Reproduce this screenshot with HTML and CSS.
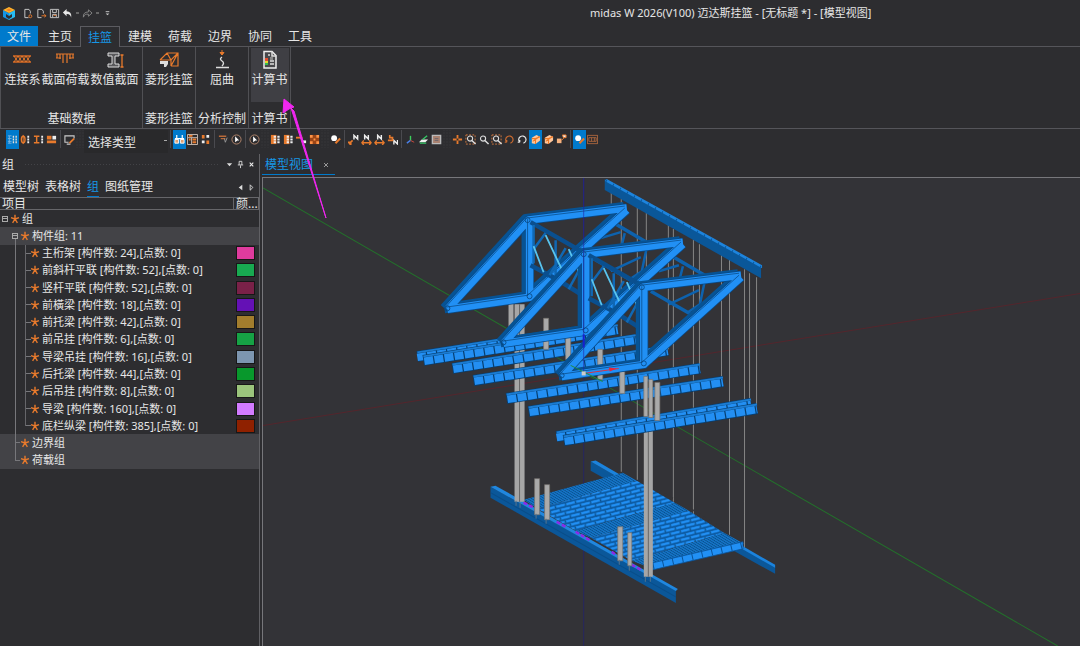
FILE: index.html
```html
<!DOCTYPE html>
<html lang="zh-CN">
<head>
<meta charset="utf-8">
<title>midas W 2026(V100) 迈达斯挂篮</title>
<link rel="stylesheet" href="styles.css">
</head>
<body>
<svg class="defs" aria-hidden="true">
  <defs>
    <symbol id="star" viewBox="0 0 10 10"><path d="M5 5V.8M5 5 1 3.6M5 5l4-1.4M5 5 2.6 8.8M5 5l2.4 3.8" stroke="#e87a2c" stroke-width="1.4" fill="none"/></symbol>
    <symbol id="page" viewBox="0 0 12 12"><path d="M8 6V3.500L6.500 1.500H2v9h4" fill="none" stroke="#d0d0d0"/></symbol>
    <symbol id="i-list" viewBox="0 0 12 12"><path d="M1 2h4M1 5h4M1 8h4M2.500 2v8M1 10h4" stroke="#7fb5e0" /><path d="M7 2v8M10 2v8" stroke="#e6dfd8" stroke-width="1.500" stroke-dasharray="2 1"/></symbol>
    <symbol id="i-loop" viewBox="0 0 12 12"><ellipse cx="3.500" cy="6" rx="2" ry="3.500" fill="none" stroke="#e87a2c" stroke-width="1.500"/><path d="M3.500 1v10" stroke="#e87a2c"/><path d="M9 2v8" stroke="#eee" stroke-width="2" stroke-dasharray="2 1"/></symbol>
    <symbol id="i-beam" viewBox="0 0 12 12"><path d="M1 2.500h6M1 9.500h6M4 2.500v7" stroke="#e87a2c" stroke-width="1.600"/><path d="M10 2v8" stroke="#eee" stroke-width="2" stroke-dasharray="2 1"/></symbol>
    <symbol id="i-blocks" viewBox="0 0 12 12"><path d="M1 2h5v4H1zM1 7h10v3H1z" fill="#e87a2c"/><path d="M7 2h4v4H7z" fill="#eee"/></symbol>
    <symbol id="i-screen" viewBox="0 0 12 12"><path d="M11 5V2H1v7h4M3 11h4" fill="none" stroke="#ccc" stroke-width="1.200"/><path d="m6 10 5-5" stroke="#e87a2c" stroke-width="2"/></symbol>
    <symbol id="i-bino" viewBox="0 0 12 12"><path d="M1 6h4v4H1zM7 6h4v4H7z" fill="#e0a070" stroke="#fff"/><path d="M3 1v4M9 1v4M1 5h10" stroke="#fff" stroke-width="1.300"/></symbol>
    <symbol id="i-tree" viewBox="0 0 12 12"><path d="M.5.500h11v11H.500zM1 4h10M5 4v7" fill="none" stroke="#d0c2b8"/><path d="M2 5h2v2H2zM6 5h4v2H6zM6 8h4v2H6zM2 1h4v2H2z" fill="#e87a2c"/></symbol>
    <symbol id="i-nodes" viewBox="0 0 12 12"><path d="M2 1h3v4H2zM7 7h3v4H7z" fill="#e87a2c"/><path d="M7 1h3v3H7zM2 7h3v3H2z" fill="#eee"/></symbol>
    <symbol id="i-filter" viewBox="0 0 12 12"><path d="M1 2.500h8M3 5h5" stroke="#b86a3a" stroke-width="1.500"/><path d="m7 5 1 4 2-5" fill="none" stroke="#999"/></symbol>
    <symbol id="i-pick" viewBox="0 0 12 12"><circle cx="6" cy="6" r="5" fill="none" stroke="#b98a6e"/><path d="m4.500 2.500 4.500 4.500H7l-2.500 2z" fill="#fff"/></symbol>
    <symbol id="i-grid" viewBox="0 0 12 12"><path d="M1 1h10v10H1z" fill="#9b4516"/><path d="M1 1h3v3H1zM8 1h3v3H8zM1 8h3v3H1zM8 8h3v3H8zM5 5h2v2H5z" fill="#ff9446"/></symbol>
    <symbol id="i-gridw" viewBox="0 0 12 12"><path d="M1 1h6v10H1z" fill="#e87a2c"/><path d="M4 3h7M4 6h7M4 9h7" stroke="#eee" stroke-width="2" stroke-dasharray="2.500 1.500"/></symbol>
    <symbol id="i-dash" viewBox="0 0 12 12"><path d="M0 4h7" stroke="#e87a2c" stroke-width="2"/><path d="M7 7h4v3H7z" fill="#eee"/></symbol>
    <symbol id="i-brush" viewBox="0 0 12 12"><circle cx="4.500" cy="4.500" r="3.200" fill="#fff"/><path d="m6 10 5-5" stroke="#e87a2c" stroke-width="2.200"/></symbol>
    <symbol id="i-n" viewBox="0 0 12 12"><path d="M6.500 6V1.500l4 4V1" fill="none" stroke="#eee" stroke-width="1.600"/><path d="m1 11 4-4M0 9h3v3" fill="none" stroke="#e87a2c" stroke-width="1.800"/></symbol>
    <symbol id="i-n2" viewBox="0 0 12 12"><path d="M4 6V1.500l4 4V1" fill="none" stroke="#eee" stroke-width="1.600"/><path d="M1 9.500h10M3 7 1 9.500 3 12M9 7l2 2.500L9 12" fill="none" stroke="#e87a2c" stroke-width="1.500"/></symbol>
    <symbol id="i-n3" viewBox="0 0 12 12"><path d="M7.500 11.500V7l4 4V6.500" fill="none" stroke="#eee" stroke-width="1.500"/><path d="M3 1v3h3v4M1 7h5" fill="none" stroke="#e87a2c" stroke-width="1.800"/></symbol>
    <symbol id="i-axes" viewBox="0 0 12 12"><path d="M6 2v5" stroke="#3bd05b" stroke-width="1.500"/><path d="m6 7-4 3" stroke="#4a80e8" stroke-width="1.500"/><path d="m6 7 4 2" stroke="#d34b3c"/></symbol>
    <symbol id="i-plane" viewBox="0 0 12 12"><path d="m1 9 3-3h7L8 9z" fill="#eee"/><path d="m5 6 5-4M2 10h7" stroke="#34c765" stroke-width="1.500"/></symbol>
    <symbol id="i-shade" viewBox="0 0 12 12"><path d="M1.500 1.500h9v9h-9z" fill="#a98271" stroke="#bbb" stroke-width="1.500"/><path d="M4 5h4M4 7h4" stroke="#69646a"/></symbol>
    <symbol id="i-move" viewBox="0 0 12 12"><path d="M6 1v4M6 7v4M1 6h4M7 6h4" stroke="#e87a2c" stroke-width="2"/></symbol>
    <symbol id="i-zoom" viewBox="0 0 12 12"><circle cx="5.500" cy="5" r="2.800" fill="none" stroke="#ddd" stroke-width="1.200"/><path d="m7.500 7 4 4" stroke="#ddd" stroke-width="1.600"/></symbol>
    <symbol id="i-frame" viewBox="0 0 12 12"><path d="M1 1h10v10H1z" fill="none" stroke="#d77b40" stroke-dasharray="2 1.500"/></symbol>
    <symbol id="i-rot" viewBox="0 0 12 12"><path d="M3 9a4 4 0 1 1 4 1M3 9V6.500M3 9H.8" fill="none" stroke="currentColor" stroke-width="1.300"/></symbol>
    <symbol id="i-cube" viewBox="0 0 12 12"><path d="m2 4 5-3 4 2v4l-5 4-4-1z" fill="#ffc79c"/><path d="M2 5h4l5-2M6 5v6M3 8l7-5" stroke="#ef7a26" stroke-width="1.200" fill="none"/></symbol>
    <symbol id="i-cubes" viewBox="0 0 12 12"><path d="M1 5h5v5H1z" fill="#f7b27e"/><path d="M7 1h4v3H8zM6 7l4-4" fill="#eee" stroke="#e87a2c"/></symbol>
    <symbol id="i-panel" viewBox="0 0 12 12"><path d="M1 1.500h10M1 10.500h10M2 4h8v4H2zM5 4v4M8 4v4M.500 1v10M11.500 1v10" fill="none" stroke="#a9653d"/></symbol>

    <pattern id="bricks" width="10" height="8" patternUnits="userSpaceOnUse" patternTransform="matrix(1 -.25 .62 .38 537 509)">
      <path d="M0 0h10v8H0z" fill="#0d5ca5"/><path d="M0 3h10v5H0z" fill="#2190f5"/><path d="M0 8h10" stroke="#074a86"/><path d="M6 3 3 8" stroke="#0b4c84"/>
    </pattern>
    <pattern id="dense" width="3" height="20" patternUnits="userSpaceOnUse" patternTransform="matrix(1 -.25 .62 .38 523 500)">
      <path d="M0 0h3v20H0z" fill="#1674c6"/><path d="M1 0v20" stroke="#07508f"/>
    </pattern>
    <path id="truss-lines" d="M446 309 527 220 625 208M528 221V297L446 309M528 297 625 210"/>
    <g id="truss" fill="none" stroke-linejoin="round">
      <use href="#truss-lines" x="-2" stroke="#075394" stroke-width="10"/>
      <use href="#truss-lines" x="1" y="1" stroke="#084a88" stroke-width="9"/>
      <use href="#truss-lines" x="1" y="1" stroke="#2190f5" stroke-width="7.500"/>
      <use href="#truss-lines" x="-1" y="-1" stroke="#07457d" stroke-width=".7"/>
      <g stroke="#07457d" stroke-width=".8"><circle cx="527" cy="221" r="2.500"/><circle cx="529" cy="297" r="2.500"/><circle cx="447" cy="309" r="2.500"/></g>
    </g>
    <g id="brace">
      <path d="m530 223 54 31M530 266l28 15 27 17" stroke="#0a4f8f" stroke-width="4.500"/>
      <path d="M555 241v40M533 226v38M565 249l-16 27M545 234l-12 16M580 268l-12 22" stroke="#1068b4" stroke-width="2.500"/>
      <path d="m533 247 10 26M545 236l16 34M568 250l10 22" stroke="#59c4ee" stroke-width="1.800"/>
    </g>
    <g id="rearbrace" fill="none" stroke="#0d62ae" stroke-width="3.500">
      <path d="m608 221 48 28M592 259l40 23"/><path d="m624 234-5 20M620 233l-20 6M640 258l-30 14M646 248l-5 24-12 8" stroke-width="2.500"/>
    </g>
    <path id="rails-back" d="M417 357 610 327M556 437 750 404"/>
    <path id="rails" d="M423 361 617 330M452 369 635 340M473 381 667 351M506 399 699 369M528 412 722 382M563 441 756 409"/>
  </defs>
</svg>

<div class="app">
  <header class="titlebar">
    <div class="quick">
      <svg class="logo" viewBox="0 0 14 15"><path d="m1 4 6 3v7l-6-3z" fill="#1496e5"/><path d="m13 4-6 3v7l6-3z" fill="#26bdf2"/><path d="m1 4 6-3 6 3-6 3z" fill="#ffb52c"/><path d="m4 4 3-1.500L10 4 7 5.500z" fill="#f58220"/><path d="m4 8 3 2 3-2v3l-3 2-3-2z" fill="#2d2d30"/></svg>
      <button aria-label="新建"><svg viewBox="0 0 12 12"><use href="#page"/><circle cx="8" cy="9" r="1.600" fill="none" stroke="#e87a2c"/></svg></button>
      <button aria-label="打开"><svg viewBox="0 0 12 12"><use href="#page"/><path d="M6 8.500h5M9 7l2 1.500L9 10" fill="none" stroke="#e87a2c"/></svg></button>
      <button aria-label="保存"><svg viewBox="0 0 12 12"><path d="M1.500 1.500h9v9h-9zM4 2v3h4V2M4 10V7h4v3" fill="none" stroke="#ccc"/><path d="M5 8h3" stroke="#e87a2c"/></svg></button>
      <button aria-label="撤销"><svg viewBox="0 0 12 12"><path d="M5 1 1 5l4 4V6.500q4-.5 5 4Q11 4 5 3.500z" fill="#e8e8e8"/></svg></button>
      <span class="dot"></span>
      <button aria-label="重做"><svg viewBox="0 0 12 12"><path d="m7 2 4 3.500L7 9V6.800Q3 6 1.500 10 1 4.500 7 4.300z" fill="none" stroke="#888"/></svg></button>
      <span class="dot"></span>
      <button aria-label="自定义"><svg viewBox="0 0 12 12"><path d="M4 4h4" stroke="#ccc"/><path d="M4 6h4L6 8z" fill="#ccc"/></svg></button>
    </div>
    <h1>midas W 2026(V100) 迈达斯挂篮 - [无标题 *] - [模型视图]</h1>
  </header>

  <nav class="menu">
    <button class="file">文件</button><button>主页</button><button class="current">挂篮</button><button>建模</button><button>荷载</button><button>边界</button><button>协同</button><button>工具</button>
  </nav>

  <section class="ribbon">
    <div class="group g-base">
      <div class="tools">
        <button><svg viewBox="0 0 20 20"><path d="M1 6h18M1 12h18" stroke="#d66a23" stroke-width="1.300"/><path d="m2 6 4 6 4-6 4 6 4-6M2 12l4-6 4 6 4-6 4 6" stroke="#e87a2c" fill="none"/></svg>连接系</button>
        <button><svg viewBox="0 0 20 20"><path d="M1 4h18M2 4v4M5 4v5M8 4v9M12 4v9M15 4v5M18 4v4M1 8h5M14 8h5" stroke="#e87a2c" stroke-width="1.200" fill="none"/></svg>截面荷载</button>
        <button><svg viewBox="0 0 20 20"><path d="M3 3h11v3h-4v8h4v3H3v-3h4V6H3z" fill="#59595c" stroke="#ddd"/><path d="M17 5v12M15.500 5h3M15.500 17h3" stroke="#e87a2c" stroke-width="1.300"/></svg>数值截面</button>
      </div>
      <h2>基础数据</h2>
    </div>
    <div class="group g-mid">
      <div class="tools"><button><svg viewBox="0 0 20 20"><path d="m1 10 7-7h11v13h-7M1 10h11l7-7M12 10v6l7-13M8 3l4 7" fill="none" stroke="#e87a2c" stroke-width="1.200"/><path d="M1 11h8v3l-2 3H5v-3H1z" fill="#ddd"/></svg>菱形挂篮</button></div>
      <h2>菱形挂篮</h2>
    </div>
    <div class="group g-mid">
      <div class="tools"><button><svg viewBox="0 0 20 20"><path d="M10 0v5M8 2.500 10 5l2-2.500z" stroke="#e87a2c" fill="#e87a2c"/><path d="M10 7q-3 2 0 4t0 5M4 17.500h13" fill="none" stroke="#ddd" stroke-width="1.400"/></svg>屈曲</button></div>
      <h2>分析控制</h2>
    </div>
    <div class="group g-last">
      <div class="tools"><button class="hover"><svg viewBox="0 0 20 20"><path d="M4 1.500h8l4 4V18H4z" fill="#48484b" stroke="#eee" stroke-width="1.500"/><path d="M12 1v5h4M8 5h2M10 11h4M10 14h4" stroke="#ddd" stroke-width="1.500" fill="none"/><path d="M5 8h3v3H5z" fill="#e64b2d"/><path d="M5 11h3v2H5z" fill="#e5d52d"/><path d="M5 13h3v2H5z" fill="#36bd4f"/><path d="M10 7h3v3h-3z" fill="#888"/></svg>计算书</button></div>
      <h2>计算书</h2>
    </div>
  </section>

  <div class="toolbar">
    <button class="on" aria-label="列表"><svg><use href="#i-list"/></svg></button><button aria-label="节点"><svg><use href="#i-loop"/></svg></button><button aria-label="截面"><svg><use href="#i-beam"/></svg></button><button aria-label="块"><svg><use href="#i-blocks"/></svg></button>
    <i class="sep"></i><button aria-label="显示"><svg><use href="#i-screen"/></svg></button><i class="grip"></i>
    <select aria-label="选择类型"><option>选择类型</option></select>
    <i class="sep"></i><button class="on" aria-label="查找"><svg><use href="#i-bino"/></svg></button><button aria-label="结构"><svg><use href="#i-tree"/></svg></button><button aria-label="全部"><svg><use href="#i-nodes"/></svg></button>
    <i class="sep"></i><button aria-label="过滤"><svg><use href="#i-filter"/></svg></button><button aria-label="拾取"><svg><use href="#i-pick"/></svg></button>
    <i class="sep"></i><button aria-label="反选"><svg><use href="#i-pick"/></svg></button><i class="grip"></i>
    <button aria-label="激活"><svg><use href="#i-gridw"/></svg></button><button aria-label="钝化"><svg><use href="#i-gridw"/></svg></button><button aria-label="切换"><svg><use href="#i-dash"/></svg></button><button aria-label="全部激活"><svg><use href="#i-grid"/></svg></button>
    <i class="grip"></i><button aria-label="格式"><svg><use href="#i-brush"/></svg></button><i class="sep"></i>
    <button aria-label="节点号"><svg><use href="#i-n"/></svg></button><button aria-label="单元号"><svg><use href="#i-n2"/></svg></button><button aria-label="荷载号"><svg><use href="#i-n2"/></svg></button><button aria-label="边界号"><svg><use href="#i-n3"/></svg></button>
    <i class="sep"></i><button aria-label="坐标轴"><svg><use href="#i-axes"/></svg></button><button aria-label="平面"><svg><use href="#i-plane"/></svg></button><button aria-label="着色"><svg><use href="#i-shade"/></svg></button><i class="grip"></i>
    <button aria-label="平移"><svg><use href="#i-move"/></svg></button><button aria-label="窗口缩放"><svg><use href="#i-frame"/><use href="#i-zoom"/></svg></button><button aria-label="缩放"><svg><use href="#i-zoom"/></svg></button><button aria-label="适合"><svg><use href="#i-frame"/><use href="#i-zoom"/></svg></button><button class="orange" aria-label="左转"><svg><use href="#i-rot"/></svg></button><button aria-label="右转"><svg><use href="#i-rot"/></svg></button><button class="on" aria-label="实体"><svg><use href="#i-cube"/></svg></button><button aria-label="消隐"><svg><use href="#i-cube"/></svg></button><button aria-label="组合"><svg><use href="#i-cubes"/></svg></button>
    <i class="sep"></i><button class="on" aria-label="刷新"><svg><use href="#i-brush"/></svg></button><button aria-label="窗格"><svg><use href="#i-panel"/></svg></button>
  </div>

  <main class="work">
    <aside class="side">
      <header class="side-head"><h2>组</h2><i class="rule"></i>
        <button aria-label="菜单"><svg viewBox="0 0 10 10"><path d="M2 3.500h6L5 7z" fill="#ddd"/></svg></button><button aria-label="固定"><svg viewBox="0 0 10 10"><path d="M3.500 1.500h3v4M2 5.500h6M3.500 1.500v4M5 6v3" stroke="#ddd" fill="none"/></svg></button><button aria-label="关闭"><svg viewBox="0 0 10 10"><path d="m3 3 4 4M7 3 3 7" stroke="#eee" stroke-width="1.200"/></svg></button>
      </header>
      <nav class="side-tabs"><button>模型树</button><button>表格树</button><button class="current">组</button><button>图纸管理</button><span class="arrows"><button aria-label="向左"><svg viewBox="0 0 10 10"><path d="M7 2v6L3 5z" fill="#ddd"/></svg></button><button aria-label="向右"><svg viewBox="0 0 10 10"><path d="M3.500 2v6l3-3z" fill="none" stroke="#ddd"/></svg></button></span></nav>
      <div class="cols"><span>项目</span><span>颜...</span></div>
      <ul class="tree">
        <li class="l0"><i class="box"></i><svg><use href="#star"/></svg><span>组</span></li>
        <li class="l1 sel"><i class="box"></i><svg><use href="#star"/></svg><span>构件组: 11</span></li>
        <li class="l2"><svg><use href="#star"/></svg><span>主桁架 [构件数: 24],[点数: 0]</span><b class="c1"></b></li>
        <li class="l2"><svg><use href="#star"/></svg><span>前斜杆平联 [构件数: 52],[点数: 0]</span><b class="c2"></b></li>
        <li class="l2"><svg><use href="#star"/></svg><span>竖杆平联 [构件数: 52],[点数: 0]</span><b class="c3"></b></li>
        <li class="l2"><svg><use href="#star"/></svg><span>前橫梁 [构件数: 18],[点数: 0]</span><b class="c4"></b></li>
        <li class="l2"><svg><use href="#star"/></svg><span>前托梁 [构件数: 42],[点数: 0]</span><b class="c5"></b></li>
        <li class="l2"><svg><use href="#star"/></svg><span>前吊挂 [构件数: 6],[点数: 0]</span><b class="c6"></b></li>
        <li class="l2"><svg><use href="#star"/></svg><span>导梁吊挂 [构件数: 16],[点数: 0]</span><b class="c7"></b></li>
        <li class="l2"><svg><use href="#star"/></svg><span>后托梁 [构件数: 44],[点数: 0]</span><b class="c8"></b></li>
        <li class="l2"><svg><use href="#star"/></svg><span>后吊挂 [构件数: 8],[点数: 0]</span><b class="c9"></b></li>
        <li class="l2"><svg><use href="#star"/></svg><span>导梁 [构件数: 160],[点数: 0]</span><b class="c10"></b></li>
        <li class="l2 end"><svg><use href="#star"/></svg><span>底栏纵梁 [构件数: 385],[点数: 0]</span><b class="c11"></b></li>
        <li class="l1 sel"><svg><use href="#star"/></svg><span>边界组</span></li>
        <li class="l1 sel end"><svg><use href="#star"/></svg><span>荷载组</span></li>
      </ul>
    </aside>

    <section class="view">
      <div class="view-tab"><span>模型视图</span><button aria-label="关闭视图"><svg viewBox="0 0 10 10"><path d="m3 3 4 4M7 3 3 7" stroke="#999"/></svg></button></div>
      <div class="canvas">
        <svg viewBox="263 179 817 467" preserveAspectRatio="xMinYMin slice" role="img" aria-label="挂篮三维模型">
          <path d="M263 426 1080 294" stroke="#5c2229" stroke-width=".8"/>
          <path d="M583 179v467" stroke="#262660"/>
          <path d="M263 189 1056 646" stroke="#23702b"/>
          <!-- hangers -->
          <path d="M610.500 190V230M620.500 200V472M636.500 205V480M645.500 210V300M667.500 225V350M672.500 230V502M692.500 240V515M698.500 245V368M720.500 255V380M728.500 260V535M743.500 270V548M748.500 274V404M755.500 278V405" stroke="#858585"/>
          <!-- rear edge beam -->
          <path d="m590 462 184 105v7L590 471z" fill="#0b5799"/><path d="m590 462 5-1 179 104v3z" fill="#1b83dd"/>
          <!-- deck -->
          <path d="m523 500 99-27 14 8-99 28z" fill="url(#dense)"/>
          <path d="m537 509 99-28 38 22-99 28z" fill="url(#bricks)"/>
          <path d="m575 531 99-28 14 8-98 27z" fill="url(#dense)"/>
          <path d="m590 538 98-27 35 22-92 28z" fill="url(#bricks)"/>
          <path d="m631 561 92-28 20 11-91 25z" fill="url(#dense)"/>
          <path d="m652 563 90-21v7l-90 21z" fill="#2190f5" stroke="#0a549a" stroke-width=".8"/>
          <path d="m652 566 90-21" stroke="#0a549a" stroke-width="7" stroke-dasharray="1 9"/>
          <path d="m639 480 37 22m14 8 35 22" stroke="#333337" stroke-width="3" stroke-dasharray="3 4"/>
          <!-- front edge beam -->
          <path d="m490 487 185 103v13L490 498z" fill="#0b5799"/><path d="m490 487 5-1 182 103-2 2z" fill="#2087df"/><path d="m490 493 185 104" stroke="#0a4d88"/>
          <path d="m523 503 12 6M556 522l9 5M575 532l15 9M611 552l4 3M631 565l9 5" stroke="#8b2be8" stroke-width="2.500" stroke-dasharray="4 2"/>
          <!-- rear bracing and hanging posts -->
          <path d="M514 305h10v197h-10zM508 303h5v40h-5z" fill="#a6a6a6"/><path d="M519 305v197" stroke="#666"/>
          <path d="M643 430h9v147h-9z" fill="#a6a6a6"/><path d="M647.500 430v147" stroke="#666"/>
          <g fill="none">
            <use href="#rails-back" stroke="#063f72" stroke-width="11"/>
            <use href="#rails-back" y="-4" stroke="#1b7cd2" stroke-width="2"/>
            <use href="#rails-back" y="1" stroke="#238ff3" stroke-width="7.500" stroke-dasharray="9 1.200"/>
            <use href="#rails" stroke="#063f72" stroke-width="11"/>
            <use href="#rails" y="-4" stroke="#1b7cd2" stroke-width="2"/>
            <use href="#rails" y="1" stroke="#238ff3" stroke-width="7.500" stroke-dasharray="0 1 9 .2"/>
          </g>
          <path d="M543 319h5v31h-5zM565 338h5v22h-5zM597 350h5v30h-5zM619 372h5v22h-5zM643 377h4v40h-4zM648 380h4v38h-4zM654 383h5v38h-5zM534 479h5v36h-5zM544 485h5v35h-5zM617 527h5v34h-5zM627 533h4v33h-4z" fill="#aaa" stroke="#77736e" stroke-width=".7"/>
          <path d="M515.500 501v5M519.500 503v5M535.500 514v5M545.500 519v5M618.500 560v5M628.500 566v5M644.500 577v5M649.500 577v5" stroke="#58748b"/>
          <!-- main trusses -->
          <use href="#rearbrace"/><use href="#rearbrace" x="58" y="33"/>
          <use href="#truss"/><use href="#brace"/>
          <use href="#truss" x="56" y="34"/><use href="#brace" x="58" y="33"/>
          <use href="#truss" x="114" y="67"/>
          <!-- top cross beam -->
          <path d="m604 180 156 87v12L604 191z" fill="#0a5799"/><path d="m604 182 2-2 155 86v3z" fill="#1d84dd"/><path d="m605 182 156 87" stroke="#0a589e" stroke-width="3" stroke-dasharray="1 7"/>
          <path d="M583 179v196" stroke="#2222a5" stroke-width="1" opacity=".6"/><path d="M583 335v13" stroke="#1720d0" stroke-width="2"/>
          <path d="M583 374 618 369" stroke="#d33549"/><path d="m608 368 8 1-7 3z" fill="#e3283c"/>
          <path d="M570 366 602 382" stroke="#218b45"/><path d="M581 372h4v4h-4z" fill="#ccc"/>
        </svg>
      </div>
    </section>
  </main>
  <svg class="pointer" viewBox="0 0 46 124" aria-hidden="true"><path d="M44 121 9 11l-2 1-6 4L2 2l10 8-3 1 3 3z" fill="#f026f0" stroke="#f026f0" stroke-linejoin="round"/></svg>
</div>
</body>
</html>
```
FILE: styles.css
```css
* { box-sizing: border-box; }
body { margin: 0; background: #2d2d30; color: #e6e6e6; font: 12px/16px "Noto Sans", "Noto Sans CJK SC", sans-serif; }
h1, h2 { margin: 0; font-size: 12px; font-weight: 400; }
button { padding: 0; border: 0; background: none; color: inherit; font: inherit; white-space: nowrap; }
svg { display: block; }
.defs { position: absolute; width: 0; height: 0; }
.app { position: relative; display: flex; flex-direction: column; height: 100vh; overflow: hidden; }

.titlebar { display: flex; flex: none; height: 26px; align-items: center; }
.quick { display: flex; flex: 0 0 590px; align-items: center; padding-left: 2px; }
.quick .logo { width: 14px; height: 15px; margin-right: 6px; }
.quick button { width: 13px; }
.quick button svg { width: 11px; height: 11px; margin: auto; }
.dot { width: 3px; height: 2px; margin: 0 2px; background: #666; }
.titlebar h1 { font-size: 11px; white-space: nowrap; }

.menu { display: flex; flex: none; height: 21px; border-bottom: 1px solid #55555a; }
.menu button { width: 40px; height: 20px; padding-top: 2px; }
.menu .file { width: 38px; background: #007acc; }
.menu .file + button { margin-left: 2px; }
.menu .current { height: 21px; padding-top: 1px; border: 1px solid #5b5b60; border-bottom: 0; background: #2d2d30; color: #1697e6; }

.ribbon { display: flex; flex: none; height: 82px; border-bottom: 1px solid #55555a; }
.group { display: flex; flex-direction: column; justify-content: space-between; align-items: center; border-right: 1px solid #505054; padding-bottom: 1px; }
.tools { display: flex; justify-content: center; gap: 1px; padding-top: 1px; }
.tools button { display: flex; flex-direction: column; align-items: center; height: 54px; gap: 2px; padding-top: 2px; }
.tools svg { width: 20px; height: 20px; }
.g-base { width: 143px; border-left: 1px solid #505054; }
.g-mid { width: 53px; }
.g-last { width: 42px; }
.group h2 { white-space: nowrap; }
.tools .hover { width: 38px; background: #3f3f44; }

.toolbar { display: flex; flex: none; height: 25px; align-items: flex-start; padding: 1px 0 0 6px; }
.toolbar button { display: grid; place-items: center; width: 13px; height: 19px; }
.toolbar button svg { width: 11px; height: 11px; }
.toolbar .on { background: #007acc; }
.toolbar .orange { color: #c86a30; }
.sep, .grip { flex: none; width: 5px; height: 18px; background: linear-gradient(#4a4a4f, #4a4a4f) center / 1px 100% no-repeat; }
.grip { width: 8px; background: radial-gradient(#55555a 1px, transparent 1px) center / 3px 3px; opacity: .4; }
.toolbar select { width: 84px; height: 23px; padding: 3px 4px 0; appearance: none; border: 0; color: #e6e6e6; font: inherit; background: linear-gradient(#aaa, #aaa) 80px 10px / 3px 1px no-repeat, #29292b; }

.work { display: flex; flex: 1; min-height: 0; }
.side { display: flex; flex: 0 0 260px; flex-direction: column; border-right: 1px solid #606064; }
.side-head { display: flex; align-items: center; height: 21px; padding: 0 2px; }
.side-head .rule { flex: 1; height: 3px; margin: 0 4px 0 10px; background: radial-gradient(#59595e 1px, transparent 1px) 0 0 / 3px 3px; opacity: .5; }
.side-head button { width: 11px; }
.side-head svg, .arrows svg { width: 9px; height: 9px; margin: auto; }
.side-tabs { display: flex; height: 22px; gap: 6px; padding: 2px 2px 0 3px; }
.side-tabs > button { height: 20px; }
.side-tabs .current { color: #1697e6; border-bottom: 1px solid #007acc; }
.arrows { display: flex; margin-left: auto; }
.arrows button { width: 11px; }
.cols { display: flex; height: 13px; border: solid #66666a; border-width: 1px 0; line-height: 12px; }
.cols span { flex: 1; padding-left: 2px; white-space: nowrap; }
.cols span + span { flex: 0 0 26px; border: solid #66666a; border-width: 0 1px; }
.tree { display: grid; flex: none; grid-auto-rows: 1fr; height: 259px; margin: 0; padding: 0; list-style: none; font-size: 11px; }
.tree li { position: relative; display: flex; align-items: center; padding-right: 4px; white-space: nowrap; }
.tree li > svg { flex: none; width: 10px; height: 10px; margin-right: 2px; }
.tree .sel { background: #434347; }
.tree .l0 { padding-left: 2px; }
.tree .l1 { padding-left: 20px; }
.tree .l1:has(.box) { padding-left: 12px; }
.tree .l2 { padding-left: 30px; }
.box { width: 6px; height: 6px; margin-right: 2px; border: 1px solid #aaa; background: linear-gradient(#aaa, #aaa) center / 4px 1px no-repeat; }
.tree li::before { content: ""; position: absolute; left: 15px; top: 0; bottom: 0; border-left: 1px solid #77777b; }
.tree .l0::before { display: none; }
.tree .l1:has(.box)::before { top: 12px; }
.tree .l1.end::before { bottom: 8px; }
.tree .l1:not(:has(.box))::after { content: ""; position: absolute; left: 15px; top: 8px; width: 5px; border-top: 1px solid #77777b; }
.tree .l2::after { content: ""; position: absolute; left: 25px; top: 0; bottom: 0; width: 5px; border-left: 1px solid #66666a; background: linear-gradient(#77777b, #77777b) 0 8px / 5px 1px no-repeat; }
.tree .l2.end::after { bottom: 8px; }
.tree b { width: 19px; height: 14px; margin-left: auto; border: 1px solid #171717; }
.c1 { background: #df3b9e; } .c2 { background: #18aa51; } .c3 { background: #7a2148; } .c4 { background: #6411b5; }
.c5 { background: #a27d2d; } .c6 { background: #16a245; } .c7 { background: #7d96b0; } .c8 { background: #08982c; }
.c9 { background: #9bc47c; } .c10 { background: #d27bff; } .c11 { background: #8f2100; }

.view { display: flex; flex: 1; min-width: 0; flex-direction: column; padding-left: 2px; }
.view-tab { display: flex; align-self: flex-start; align-items: center; gap: 8px; width: 73px; height: 21px; padding: 2px 0 0 3px; border-bottom: 1px solid #007acc; color: #1697e6; }
.view-tab span { white-space: nowrap; }
.view-tab svg { width: 10px; height: 10px; }
.canvas { flex: 1; min-height: 0; margin-top: 2px; border: solid #77777b; border-width: 1px 0 0 1px; background: #333337; }
.canvas svg { width: 100%; height: 100%; }
.pointer { position: absolute; left: 282px; top: 97px; width: 46px; height: 124px; }
```
